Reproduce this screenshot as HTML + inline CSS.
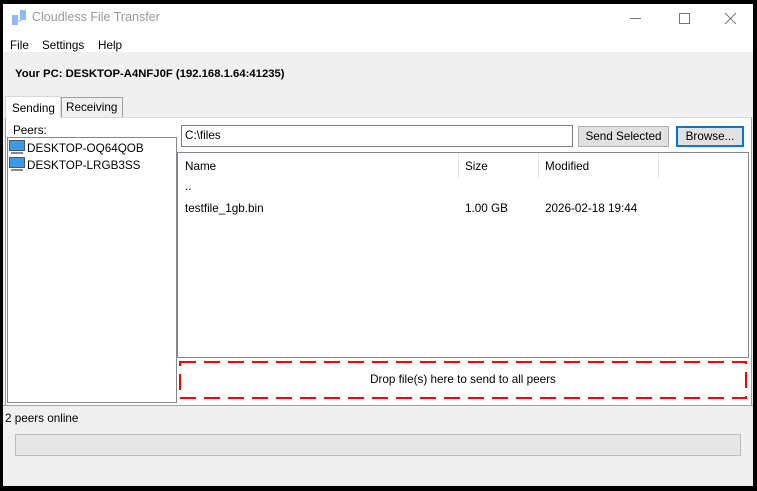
<!DOCTYPE html>
<html><head><meta charset="utf-8"><style>
*{margin:0;padding:0;box-sizing:border-box}
body{width:757px;height:491px;background:#000;position:relative;overflow:hidden;font-family:"Liberation Sans",sans-serif;font-size:11.7px;line-height:15px;color:#000}
.a{position:absolute}
</style></head><body>
<div class="a" style="left:3px;top:4px;width:750px;height:482px;background:#f0f0f0"></div>
<div class="a" style="left:3px;top:4px;width:750px;height:48px;background:#fff"></div>
<svg class="a" style="left:11px;top:9px" width="16" height="18" viewBox="0 0 16 18"><rect x="1" y="6" width="6" height="10" fill="#8cbcf3"/><rect x="9" y="1" width="6" height="10" fill="#8cbcf3"/><path d="M7 12h3V10" stroke="#8cbcf3" fill="none"/></svg>
<div class="a" style="left:32px;top:10px;font-size:12.5px;color:#999">Cloudless File Transfer</div>
<div class="a" style="left:630px;top:18px;width:11px;height:1px;background:#777"></div>
<div class="a" style="left:679px;top:13px;width:11px;height:11px;border:1px solid #777"></div>
<svg class="a" style="left:724px;top:12px" width="13" height="13"><path d="M1 1L12 12M12 1L1 12" stroke="#777"/></svg>
<div class="a" style="left:10px;top:38px">File</div>
<div class="a" style="left:42px;top:38px">Settings</div>
<div class="a" style="left:98px;top:38px">Help</div>
<div class="a" style="left:15px;top:67px;font-weight:bold;font-size:11.3px">Your PC: DESKTOP-A4NFJ0F (192.168.1.64:41235)</div>
<div class="a" style="left:5px;top:117px;width:747px;height:289px;background:#fff;border:1px solid #a0a0a0;border-top-color:#d9d9d9"></div>
<div class="a" style="left:5px;top:96px;width:56px;height:22px;background:#fff;border:1px solid #d9d9d9;border-bottom:none;padding:4px 0 0 6px">Sending</div>
<div class="a" style="left:61px;top:97px;width:62px;height:20px;background:#f0f0f0;border:1px solid #a0a0a0;border-bottom:none;padding:2px 0 0 4px">Receiving</div>
<div class="a" style="left:13px;top:123px">Peers:</div>
<div class="a" style="left:7px;top:137px;width:170px;height:266px;border:1px solid #828790;background:#fff"></div>
<svg class="a" style="left:9px;top:140px" width="16" height="14"><rect x="0.5" y="0.5" width="15" height="10" fill="#3b9be8" stroke="#555"/><rect x="2" y="12" width="12" height="2" fill="#888"/></svg>
<div class="a" style="left:27px;top:141px">DESKTOP-OQ64QOB</div>
<svg class="a" style="left:9px;top:157px" width="16" height="14"><rect x="0.5" y="0.5" width="15" height="10" fill="#3b9be8" stroke="#555"/><rect x="2" y="12" width="12" height="2" fill="#888"/></svg>
<div class="a" style="left:27px;top:158px">DESKTOP-LRGB3SS</div>
<div class="a" style="left:181px;top:125px;width:392px;height:22px;border:1px solid #7a7a7a;background:#fff;padding:2px 3px">C:\files</div>
<div class="a" style="left:578px;top:126px;width:91px;height:21px;border:1px solid #adadad;background:#e1e1e1;text-align:center;padding-top:2px">Send Selected</div>
<div class="a" style="left:676px;top:126px;width:68px;height:21px;border:2px solid #0078d7;background:#e1e1e1;text-align:center;padding-top:1px">Browse...</div>
<div class="a" style="left:177px;top:152px;width:572px;height:206px;border:1px solid #828790;background:#fff"></div>
<div class="a" style="left:458px;top:153px;width:1px;height:25px;background:#e5e5e5"></div>
<div class="a" style="left:538px;top:153px;width:1px;height:25px;background:#e5e5e5"></div>
<div class="a" style="left:658px;top:153px;width:1px;height:25px;background:#e5e5e5"></div>
<div class="a" style="left:185px;top:159px">Name</div>
<div class="a" style="left:465px;top:159px">Size</div>
<div class="a" style="left:545px;top:159px">Modified</div>
<div class="a" style="left:185px;top:179px">..</div>
<div class="a" style="left:185px;top:201px">testfile_1gb.bin</div>
<div class="a" style="left:465px;top:201px">1.00 GB</div>
<div class="a" style="left:545px;top:201px">2026-02-18 19:44</div>
<svg class="a" style="left:179px;top:361px" width="568" height="38" shape-rendering="crispEdges"><rect x="1" y="1" width="566" height="36" fill="none" stroke="#f00" stroke-width="2" stroke-dasharray="16 8"/></svg>
<div class="a" style="left:179px;top:372px;width:568px;text-align:center">Drop file(s) here to send to all peers</div>
<div class="a" style="left:3px;top:405px;width:750px;height:1px;background:#a0a0a0"></div>
<div class="a" style="left:5px;top:411px">2 peers online</div>
<div class="a" style="left:15px;top:434px;width:726px;height:22px;border:1px solid #bcbcbc;background:#e6e6e6"></div>
</body></html>
